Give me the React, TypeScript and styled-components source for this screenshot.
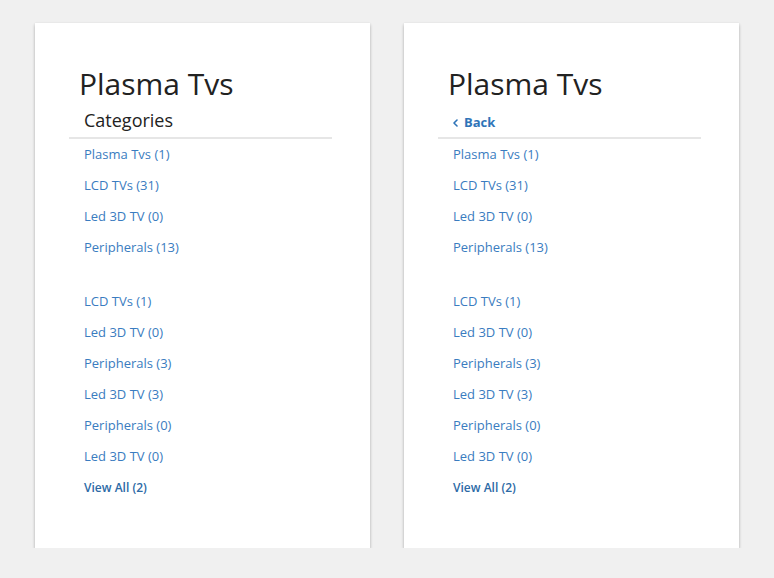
import React from "react";
import styled, { createGlobalStyle } from "styled-components";

const Global = createGlobalStyle`
  html, body { margin: 0; padding: 0; background: #f0f0f0; }
  body { font-family: "Open Sans", "Liberation Sans", sans-serif; }
`;

const Page = styled.div`
  display: flex;
  gap: 34px;
  padding: 23px 0 0 35px;
`;

const Card = styled.div`
  width: 335px;
  height: 525px;
  box-sizing: border-box;
  background: #fff;
  padding: 43px 38px 0 34px;
  box-shadow: 0 2px 3px rgba(0, 0, 0, 0.25), 0 0 2px rgba(0, 0, 0, 0.06);
`;

const Title = styled.h1`
  margin: 0;
  padding-left: 10px;
  font-size: 30px;
  line-height: 36px;
  font-weight: 400;
  color: #222;
`;

const Header = styled.div`
  margin-top: 6px;
  padding: 0 0 5px 15px;
  border-bottom: 2px solid #e6e6e6;
  display: flex;
  align-items: center;
  height: 24px;
`;

const HeaderLabel = styled.span`
  font-size: 18px;
  line-height: 24px;
  color: #222;
`;

const BackLink = styled.a`
  display: flex;
  align-items: center;
  gap: 6px;
  padding-top: 4px;
  font-size: 13px;
  line-height: 24px;
  font-weight: 700;
  color: #2f74b8;
  text-decoration: none;
  svg { margin-top: 1px; }
`;

const List = styled.ul<{ $gapTop?: boolean }>`
  list-style: none;
  margin: ${(p) => (p.$gapTop ? "23px" : "0")} 0 0;
  padding: 0 0 0 15px;
`;

const Item = styled.li<{ $strong?: boolean }>`
  font-size: ${(p) => (p.$strong ? "12px" : "13px")};
  line-height: 31px;
  font-weight: ${(p) => (p.$strong ? 600 : 400)};
  color: ${(p) => (p.$strong ? "#2d6aa6" : "#3a7cc0")};
`;

const first = ["Plasma Tvs (1)", "LCD TVs (31)", "Led 3D TV (0)", "Peripherals (13)"];
const second = [
  "LCD TVs (1)",
  "Led 3D TV (0)",
  "Peripherals (3)",
  "Led 3D TV (3)",
  "Peripherals (0)",
  "Led 3D TV (0)",
];

const Chevron = () => (
  <svg width="5" height="8" viewBox="0 0 5 8" fill="none">
    <polyline points="4,1 1,4 4,7" stroke="#2f74b8" strokeWidth="1.6" strokeLinecap="round" strokeLinejoin="round" />
  </svg>
);

const Panel = ({ back }: { back?: boolean }) => (
  <Card>
    <Title>Plasma Tvs</Title>
    <Header>
      {back ? (
        <BackLink href="#">
          <Chevron />
          Back
        </BackLink>
      ) : (
        <HeaderLabel>Categories</HeaderLabel>
      )}
    </Header>
    <List>
      {first.map((t, i) => (
        <Item key={i}>{t}</Item>
      ))}
    </List>
    <List $gapTop>
      {second.map((t, i) => (
        <Item key={i}>{t}</Item>
      ))}
      <Item $strong>View All (2)</Item>
    </List>
  </Card>
);

export default function App() {
  return (
    <>
      <Global />
      <Page>
        <Panel />
        <Panel back />
      </Page>
    </>
  );
}
